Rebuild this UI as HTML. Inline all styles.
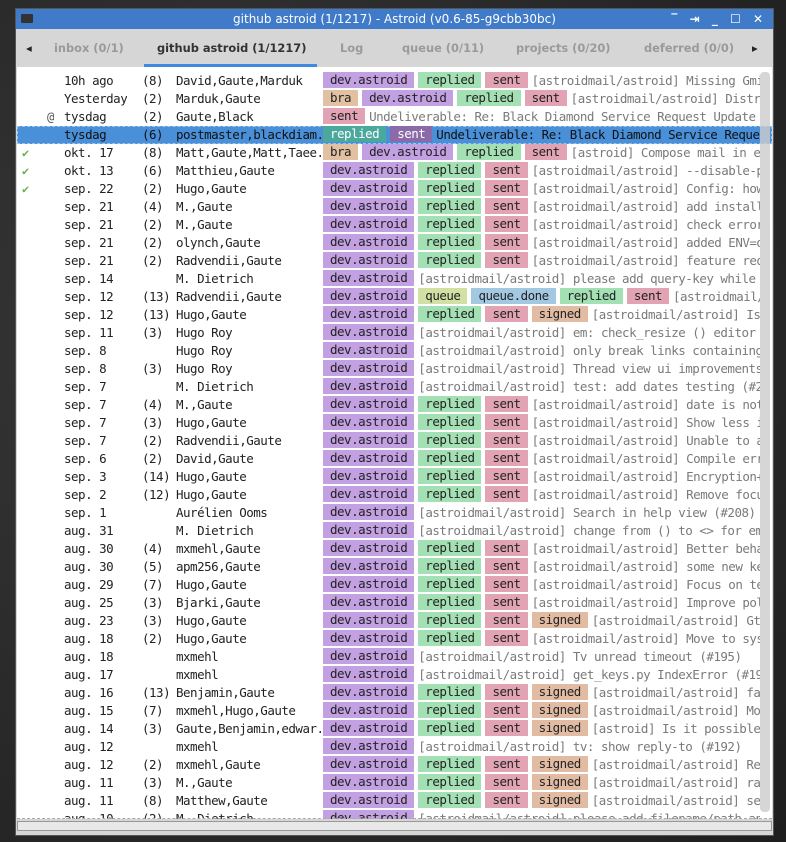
<!DOCTYPE html>
<html><head><meta charset="utf-8"><style>
body{margin:0;width:786px;height:842px;overflow:hidden;background:#2b2b2b;background:radial-gradient(circle at 30% 40%,#3a3a3a,#1e1e1e);font-family:"DejaVu Sans","Liberation Sans",sans-serif}
.win{position:absolute;left:15px;top:8px;width:757px;height:826px;background:#d6d6d6;border:1px solid #555}
.tb{position:absolute;left:0;top:0;width:757px;height:20px;background:#3f7bc8;color:#fff;font-size:12px;text-align:center;line-height:20px}
.tb .ic{position:absolute;left:5px;top:5px;width:12px;height:9px;background:#333;border-radius:1px}
.tb .bt{position:absolute;right:6px;top:0;font-size:12px;letter-spacing:4px;font-weight:bold}
.tabs{position:absolute;left:0;top:21px;width:757px;height:38px;background:#d6d6d6;font-size:11.4px;font-weight:bold;color:#9a9a9a}
.tabs span{position:absolute;top:11px}
.ul{position:absolute;left:128px;top:34px;width:173px;height:3px;background:#3d8ae0}
.list{position:absolute;left:1px;top:58px;width:755px;height:752px;background:#fff;overflow:hidden}
.r{position:relative;height:18px;font-family:"DejaVu Sans Mono","Liberation Mono",monospace;font-size:12.5px;letter-spacing:-0.5px;line-height:18px;color:#222;white-space:nowrap}
.r span{position:absolute;top:0;overflow:hidden}
.d{left:47px}.c{left:125px}.a{left:159px;width:147px}.t{left:306px;width:437px;color:#7a7a7a}
.t b{font-weight:normal;color:#222;display:inline-block;padding:0 7px;margin-right:4px;line-height:16px;height:16px;vertical-align:1px}
.p{background:#c2a0e2}.g{background:#a3e0b4}.s{background:#e2a3b5}.o{background:#e2c1a3}.n{background:#e2bba3}.q{background:#d2e0a3}.u{background:#a3c9e2}
.sel{background:#4a90d9;color:#111;outline:1px dashed #9cc4ee;outline-offset:-1px}
.sel .t{color:#111}.sel .g{background:#4aa89c;color:#fff}.sel .sp{background:#8a6aa8;color:#fff}
.r span.ck{left:5px;color:#6ab04c;font-size:12px}
.sb{position:absolute;right:2px;top:5px;width:10px;height:740px;background:#ccc;border-radius:4px;opacity:.8}
.dash{position:absolute;left:0;top:751px;width:755px;border-top:1px dashed #aaa}
.hs{position:absolute;left:1px;top:812px;width:755px;height:10px;background:#e8e8e8;border:1px solid #999;box-sizing:border-box}
</style></head><body>
<div class="win">
<div class="tb"><div class="ic"></div>github astroid (1/1217) - Astroid (v0.6-85-g9cbb30bc)<div class="bt">‾ ⇥ _ ☐ ✕</div></div>
<div class="tabs">
<span style="left:10px;color:#222">◂</span>
<span style="left:38px">inbox (0/1)</span>
<span style="left:141px;color:#333">github astroid (1/1217)</span>
<span style="left:324px">Log</span>
<span style="left:386px">queue (0/11)</span>
<span style="left:500px">projects (0/20)</span>
<span style="left:628px">deferred (0/0)</span>
<span style="left:736px;color:#222">▸</span>
<div class="ul"></div>
</div>
<div class="list"><div style="height:5px"></div>
<div class="r"><span class="d">10h ago</span><span class="c">(8)</span><span class="a">David,Gaute,Marduk</span><span class="t"><b class="p">dev.astroid</b><b class="g">replied</b><b class="s">sent</b>[astroidmail/astroid] Missing Gmime</span></div>
<div class="r"><span class="d">Yesterday</span><span class="c">(2)</span><span class="a">Marduk,Gaute</span><span class="t"><b class="o">bra</b><b class="p">dev.astroid</b><b class="g">replied</b><b class="s">sent</b>[astroidmail/astroid] Distrib</span></div>
<div class="r"><span style="left:30px;color:#555">@</span><span class="d">tysdag</span><span class="c">(2)</span><span class="a">Gaute,Black</span><span class="t"><b class="s">sent</b>Undeliverable: Re: Black Diamond Service Request Update [</span></div>
<div class="r sel"><span class="d">tysdag</span><span class="c">(6)</span><span class="a">postmaster,blackdiam.</span><span class="t"><b class="g">replied</b><b class="sp">sent</b>Undeliverable: Re: Black Diamond Service Request</span></div>
<div class="r"><span class="ck">✔</span><span class="d">okt. 17</span><span class="c">(8)</span><span class="a">Matt,Gaute,Matt,Taee.</span><span class="t"><b class="o">bra</b><b class="p">dev.astroid</b><b class="g">replied</b><b class="s">sent</b>[astroid] Compose mail in ext</span></div>
<div class="r"><span class="ck">✔</span><span class="d">okt. 13</span><span class="c">(6)</span><span class="a">Matthieu,Gaute</span><span class="t"><b class="p">dev.astroid</b><b class="g">replied</b><b class="s">sent</b>[astroidmail/astroid] --disable-pl</span></div>
<div class="r"><span class="ck">✔</span><span class="d">sep. 22</span><span class="c">(2)</span><span class="a">Hugo,Gaute</span><span class="t"><b class="p">dev.astroid</b><b class="g">replied</b><b class="s">sent</b>[astroidmail/astroid] Config: how</span></div>
<div class="r"><span class="d">sep. 21</span><span class="c">(4)</span><span class="a">M.,Gaute</span><span class="t"><b class="p">dev.astroid</b><b class="g">replied</b><b class="s">sent</b>[astroidmail/astroid] add install-</span></div>
<div class="r"><span class="d">sep. 21</span><span class="c">(2)</span><span class="a">M.,Gaute</span><span class="t"><b class="p">dev.astroid</b><b class="g">replied</b><b class="s">sent</b>[astroidmail/astroid] check error</span></div>
<div class="r"><span class="d">sep. 21</span><span class="c">(2)</span><span class="a">olynch,Gaute</span><span class="t"><b class="p">dev.astroid</b><b class="g">replied</b><b class="s">sent</b>[astroidmail/astroid] added ENV=os</span></div>
<div class="r"><span class="d">sep. 21</span><span class="c">(2)</span><span class="a">Radvendii,Gaute</span><span class="t"><b class="p">dev.astroid</b><b class="g">replied</b><b class="s">sent</b>[astroidmail/astroid] feature requ</span></div>
<div class="r"><span class="d">sep. 14</span><span class="a">M. Dietrich</span><span class="t"><b class="p">dev.astroid</b>[astroidmail/astroid] please add query-key while i</span></div>
<div class="r"><span class="d">sep. 12</span><span class="c">(13)</span><span class="a">Radvendii,Gaute</span><span class="t"><b class="p">dev.astroid</b><b class="q">queue</b><b class="u">queue.done</b><b class="g">replied</b><b class="s">sent</b>[astroidmail/a</span></div>
<div class="r"><span class="d">sep. 12</span><span class="c">(13)</span><span class="a">Hugo,Gaute</span><span class="t"><b class="p">dev.astroid</b><b class="g">replied</b><b class="s">sent</b><b class="n">signed</b>[astroidmail/astroid] Issu</span></div>
<div class="r"><span class="d">sep. 11</span><span class="c">(3)</span><span class="a">Hugo Roy</span><span class="t"><b class="p">dev.astroid</b>[astroidmail/astroid] em: check_resize () editor w</span></div>
<div class="r"><span class="d">sep. 8</span><span class="a">Hugo Roy</span><span class="t"><b class="p">dev.astroid</b>[astroidmail/astroid] only break links containing</span></div>
<div class="r"><span class="d">sep. 8</span><span class="c">(3)</span><span class="a">Hugo Roy</span><span class="t"><b class="p">dev.astroid</b>[astroidmail/astroid] Thread view ui improvements</span></div>
<div class="r"><span class="d">sep. 7</span><span class="a">M. Dietrich</span><span class="t"><b class="p">dev.astroid</b>[astroidmail/astroid] test: add dates testing (#21</span></div>
<div class="r"><span class="d">sep. 7</span><span class="c">(4)</span><span class="a">M.,Gaute</span><span class="t"><b class="p">dev.astroid</b><b class="g">replied</b><b class="s">sent</b>[astroidmail/astroid] date is not</span></div>
<div class="r"><span class="d">sep. 7</span><span class="c">(3)</span><span class="a">Hugo,Gaute</span><span class="t"><b class="p">dev.astroid</b><b class="g">replied</b><b class="s">sent</b>[astroidmail/astroid] Show less in</span></div>
<div class="r"><span class="d">sep. 7</span><span class="c">(2)</span><span class="a">Radvendii,Gaute</span><span class="t"><b class="p">dev.astroid</b><b class="g">replied</b><b class="s">sent</b>[astroidmail/astroid] Unable to ad</span></div>
<div class="r"><span class="d">sep. 6</span><span class="c">(2)</span><span class="a">David,Gaute</span><span class="t"><b class="p">dev.astroid</b><b class="g">replied</b><b class="s">sent</b>[astroidmail/astroid] Compile erro</span></div>
<div class="r"><span class="d">sep. 3</span><span class="c">(14)</span><span class="a">Hugo,Gaute</span><span class="t"><b class="p">dev.astroid</b><b class="g">replied</b><b class="s">sent</b>[astroidmail/astroid] Encryption+S</span></div>
<div class="r"><span class="d">sep. 2</span><span class="c">(12)</span><span class="a">Hugo,Gaute</span><span class="t"><b class="p">dev.astroid</b><b class="g">replied</b><b class="s">sent</b>[astroidmail/astroid] Remove focus</span></div>
<div class="r"><span class="d">sep. 1</span><span class="a">Aurélien Ooms</span><span class="t"><b class="p">dev.astroid</b>[astroidmail/astroid] Search in help view (#208)</span></div>
<div class="r"><span class="d">aug. 31</span><span class="a">M. Dietrich</span><span class="t"><b class="p">dev.astroid</b>[astroidmail/astroid] change from () to &lt;&gt; for ema</span></div>
<div class="r"><span class="d">aug. 30</span><span class="c">(4)</span><span class="a">mxmehl,Gaute</span><span class="t"><b class="p">dev.astroid</b><b class="g">replied</b><b class="s">sent</b>[astroidmail/astroid] Better behav</span></div>
<div class="r"><span class="d">aug. 30</span><span class="c">(5)</span><span class="a">apm256,Gaute</span><span class="t"><b class="p">dev.astroid</b><b class="g">replied</b><b class="s">sent</b>[astroidmail/astroid] some new key</span></div>
<div class="r"><span class="d">aug. 29</span><span class="c">(7)</span><span class="a">Hugo,Gaute</span><span class="t"><b class="p">dev.astroid</b><b class="g">replied</b><b class="s">sent</b>[astroidmail/astroid] Focus on tex</span></div>
<div class="r"><span class="d">aug. 25</span><span class="c">(3)</span><span class="a">Bjarki,Gaute</span><span class="t"><b class="p">dev.astroid</b><b class="g">replied</b><b class="s">sent</b>[astroidmail/astroid] Improve poll</span></div>
<div class="r"><span class="d">aug. 23</span><span class="c">(3)</span><span class="a">Hugo,Gaute</span><span class="t"><b class="p">dev.astroid</b><b class="g">replied</b><b class="s">sent</b><b class="n">signed</b>[astroidmail/astroid] Gtk</span></div>
<div class="r"><span class="d">aug. 18</span><span class="c">(2)</span><span class="a">Hugo,Gaute</span><span class="t"><b class="p">dev.astroid</b><b class="g">replied</b><b class="s">sent</b>[astroidmail/astroid] Move to syst</span></div>
<div class="r"><span class="d">aug. 18</span><span class="a">mxmehl</span><span class="t"><b class="p">dev.astroid</b>[astroidmail/astroid] Tv unread timeout (#195)</span></div>
<div class="r"><span class="d">aug. 17</span><span class="a">mxmehl</span><span class="t"><b class="p">dev.astroid</b>[astroidmail/astroid] get_keys.py IndexError (#197</span></div>
<div class="r"><span class="d">aug. 16</span><span class="c">(13)</span><span class="a">Benjamin,Gaute</span><span class="t"><b class="p">dev.astroid</b><b class="g">replied</b><b class="s">sent</b><b class="n">signed</b>[astroidmail/astroid] fai</span></div>
<div class="r"><span class="d">aug. 15</span><span class="c">(7)</span><span class="a">mxmehl,Hugo,Gaute</span><span class="t"><b class="p">dev.astroid</b><b class="g">replied</b><b class="s">sent</b><b class="n">signed</b>[astroidmail/astroid] Mor</span></div>
<div class="r"><span class="d">aug. 14</span><span class="c">(3)</span><span class="a">Gaute,Benjamin,edwar.</span><span class="t"><b class="p">dev.astroid</b><b class="g">replied</b><b class="s">sent</b><b class="n">signed</b>[astroid] Is it possible</span></div>
<div class="r"><span class="d">aug. 12</span><span class="a">mxmehl</span><span class="t"><b class="p">dev.astroid</b>[astroidmail/astroid] tv: show reply-to (#192)</span></div>
<div class="r"><span class="d">aug. 12</span><span class="c">(2)</span><span class="a">mxmehl,Gaute</span><span class="t"><b class="p">dev.astroid</b><b class="g">replied</b><b class="s">sent</b><b class="n">signed</b>[astroidmail/astroid] Rep</span></div>
<div class="r"><span class="d">aug. 11</span><span class="c">(3)</span><span class="a">M.,Gaute</span><span class="t"><b class="p">dev.astroid</b><b class="g">replied</b><b class="s">sent</b><b class="n">signed</b>[astroidmail/astroid] raw</span></div>
<div class="r"><span class="d">aug. 11</span><span class="c">(8)</span><span class="a">Matthew,Gaute</span><span class="t"><b class="p">dev.astroid</b><b class="g">replied</b><b class="s">sent</b><b class="n">signed</b>[astroidmail/astroid] seg</span></div>
<div class="r"><span class="d">aug. 10</span><span class="c">(2)</span><span class="a">M. Dietrich</span><span class="t"><b class="p">dev.astroid</b>[astroidmail/astroid] please add filename/path and</span></div>
<div class="sb"></div>
<div class="dash"></div>
</div>
<div class="hs"></div>
</div>
</body></html>
